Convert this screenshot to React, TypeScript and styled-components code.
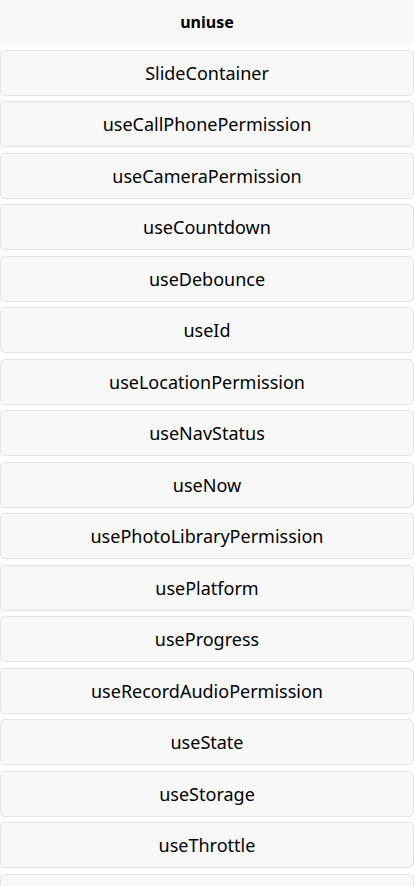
import React from "react";
import styled, { createGlobalStyle } from "styled-components";

const items = [
  "SlideContainer",
  "useCallPhonePermission",
  "useCameraPermission",
  "useCountdown",
  "useDebounce",
  "useId",
  "useLocationPermission",
  "useNavStatus",
  "useNow",
  "usePhotoLibraryPermission",
  "usePlatform",
  "useProgress",
  "useRecordAudioPermission",
  "useState",
  "useStorage",
  "useThrottle",
  "useUpload",
];

const GlobalStyle = createGlobalStyle`
  html, body {
    margin: 0;
    padding: 0;
    background: #fff;
    font-family: "Noto Sans", "Noto Sans CJK SC", sans-serif;
  }
`;

const Page = styled.div`
  width: 100%;
  display: flex;
  flex-direction: column;
`;

const NavBar = styled.div`
  height: 44px;
  background-color: #f8f8f8;
  display: flex;
  align-items: center;
  justify-content: center;
  font-size: 16px;
  font-weight: 700;
  color: #000;
`;

const List = styled.div`
  display: flex;
  flex-direction: column;
`;

const Item = styled.button`
  margin-top: 5.5px;
  height: 46px;
  width: 100%;
  padding: 0 14px;
  box-sizing: border-box;
  background-color: #f8f8f8;
  border: 1px solid #e3e3e3;
  border-radius: 5px;
  font-family: "Noto Sans", "Noto Sans CJK SC", sans-serif;
  font-size: 18px;
  color: #000;
  cursor: pointer;
  display: flex;
  align-items: center;
  justify-content: center;

  &:active {
    background-color: #dedede;
  }
`;

const App = () => {
  return (
    <Page>
      <GlobalStyle />
      <NavBar>uniuse</NavBar>
      <List>
        {items.map((name) => (
          <Item key={name}>{name}</Item>
        ))}
      </List>
    </Page>
  );
};

export default App;
